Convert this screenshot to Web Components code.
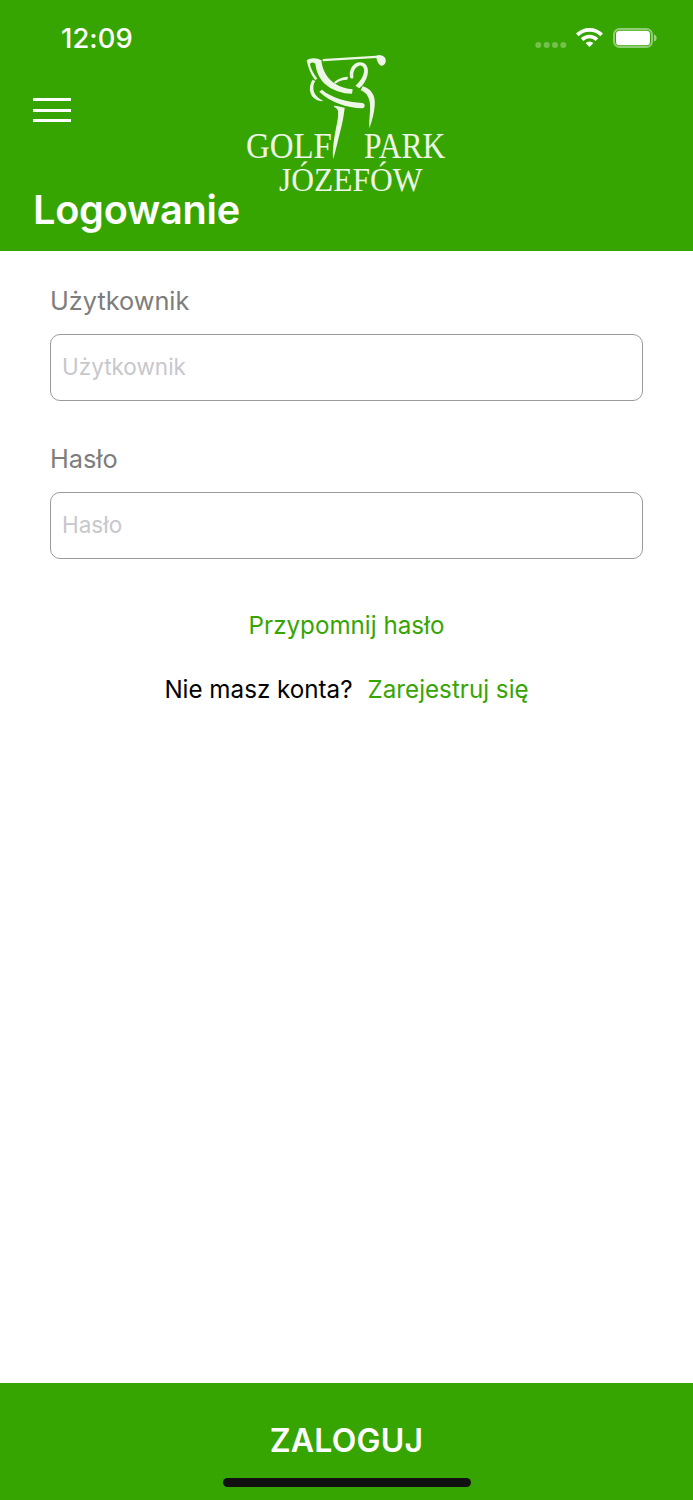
<!DOCTYPE html>
<html lang="pl"><head><meta charset="utf-8"><title>Logowanie</title>
<style>html,body{margin:0;padding:0;background:#fff}body{font-family:Inter,"Liberation Sans",sans-serif}</style>
</head><body>
<login-screen></login-screen>
<script>
function def(name, html){
  customElements.define(name, class extends HTMLElement{
    constructor(){super();this.attachShadow({mode:'open'}).innerHTML=html;}
  });
}
def('status-bar',`<style>
:host{display:flex;align-items:flex-start;justify-content:space-between;height:34px;padding:21px 35px 0 61px;color:#fff}
.t{font:500 27.300px/36px Inter,sans-serif;letter-spacing:.1px}
svg{display:block;margin-top:5px}
</style><span class="t">12:09</span>
<svg width="123" height="24" viewBox="0 0 123 24">
<g fill="#fff" fill-opacity=".3"><circle cx="3.300" cy="19" r="3"/><circle cx="11.700" cy="19" r="3"/><circle cx="20" cy="19" r="3"/><circle cx="28.300" cy="19" r="3"/></g>
<g fill="none" stroke="#fff" stroke-width="3.700"><path d="M42.340 8.840A17.200 17.200 0 0 1 66.660 8.840"/><path d="M47.080 13.580A10.500 10.500 0 0 1 61.920 13.580"/></g>
<path d="M54.500 21L50.610 17.110A5.500 5.500 0 0 1 58.390 17.110Z" fill="#fff"/>
<rect x="79" y="3" width="38" height="18" rx="5.500" fill="none" stroke="#fff" stroke-opacity=".45" stroke-width="2"/>
<rect x="81" y="4.800" width="34" height="14.400" rx="3.500" fill="#fff"/>
<path d="M119 8.500c1.800.4 2.600 1.800 2.600 3.500s-.8 3.100-2.600 3.500z" fill="#fff" fill-opacity=".5"/>
</svg>`);
def('menu-icon',`<style>:host{display:block;width:38px;height:24px}
i{display:block;height:3px;background:#fff;margin-bottom:7.500px}</style><i></i><i></i><i></i>`);
def('club-logo',`<style>
:host{display:block;position:absolute;left:230px;top:45px;width:230px;height:160px;color:#eef6e8}
svg{position:absolute;inset:0}
span{position:absolute;font-family:"Liberation Serif",serif;white-space:nowrap;line-height:1;transform-origin:0 50%}
</style>
<svg width="230" height="160" viewBox="0 0 690 480" fill="#eef6e8">
<path d="M278 42L438 32C446 28 458 29 465 38C471 50 464 62 455 62C446 61 442 50 439 39L278 49Z"/>
<path d="M230 46C240 38 262 38 274 46C276 70 288 98 312 114C330 126 350 132 368 133L366 146C338 146 306 136 284 116C264 96 258 72 256 56C248 50 242 52 240 58C243 72 252 90 262 100L256 106C244 92 234 66 230 46Z"/>
<path d="M248 104C238 118 236 140 248 156C256 164 268 170 280 168C262 158 250 146 250 128C250 120 252 114 256 108Z"/>
<path d="M276 134C300 156 350 172 398 174C406 176 406 188 398 190C350 188 300 172 268 140Z"/>
<path d="M360 96C356 74 370 52 390 52C410 52 418 70 412 92C408 106 400 120 388 130L376 122C390 110 400 94 402 80C404 68 396 60 388 62C376 66 368 78 370 96C370 102 362 102 360 96Z"/>
<path d="M312 112C322 102 336 96 354 95L352 104C338 104 326 108 316 116Z"/>
<path d="M398 124C422 130 438 152 434 182C432 206 426 228 418 250C416 225 422 200 420 178C418 155 408 142 392 136Z"/>
<path d="M312 182C322 182 334 186 344 188C342 210 336 240 328 270C322 295 316 320 310 342C306 320 312 280 318 250C322 230 326 212 324 198C322 192 318 188 312 186Z"/>
</svg>
<span style="left:16px;top:84px;font-size:35px;transform:scaleX(.94)">GOLF</span>
<span style="left:134px;top:84px;font-size:35px;transform:scaleX(.9)">PARK</span>
<span style="left:49px;top:119px;font-size:33px;transform:scaleX(.955)">JÓZEFÓW</span>`);
def('app-header',`<style>
:host{display:block;position:relative;height:251px;background:#37a501;box-sizing:border-box;color:#fff}
.m{padding:43px 0 0 33px}
h1{margin:0;padding:65px 0 0 33px;font:600 39.700px/46px Inter,sans-serif;letter-spacing:-.25px}
</style><status-bar></status-bar><div class="m"><menu-icon></menu-icon></div><h1><slot></slot></h1><club-logo></club-logo>`);
def('text-field',`<style>
:host{display:block;margin-bottom:42px}
label{display:block;font:400 25.300px/32px Inter,sans-serif;color:#7d7d7d;margin-bottom:17px}
.b{height:65px;border:1px solid #9a9a9a;border-radius:10px;display:flex;align-items:center;padding:0 11px 1px;box-sizing:content-box;font:400 22.500px/28px Inter,sans-serif;color:#c7c7cd;height:64px}
</style><label><slot></slot></label><div class="b"><slot name="ph"></slot></div>`);
def('green-link',`<style>:host{display:inline;color:#37a501}</style><slot></slot>`);
def('submit-bar',`<style>
:host{display:block;position:relative;height:117px;background:#37a501;color:#fff;text-align:center;font:600 32px/116px Inter,sans-serif;letter-spacing:.2px}
i{position:absolute;left:223px;top:95px;width:248px;height:9px;border-radius:5px;background:#111}
</style><slot></slot><i></i>`);
def('login-screen',`<style>
:host{display:flex;flex-direction:column;height:1500px;width:693px}
main{flex:1;padding:34px 50px 0 50px}
.links{font:400 24.200px/32px Inter,sans-serif;text-align:center;margin-top:51px;color:#000}
.links p{margin:0 0 32px}
.gap{display:inline-block;width:15px}
</style>
<app-header>Logowanie</app-header>
<main>
<text-field>Użytkownik<span slot="ph">Użytkownik</span></text-field>
<text-field>Hasło<span slot="ph">Hasło</span></text-field>
<div class="links"><p><green-link>Przypomnij hasło</green-link></p>
<p>Nie masz konta?<span class="gap"></span><green-link>Zarejestruj się</green-link></p></div>
</main>
<submit-bar>ZALOGUJ</submit-bar>`);
</script></body></html>
